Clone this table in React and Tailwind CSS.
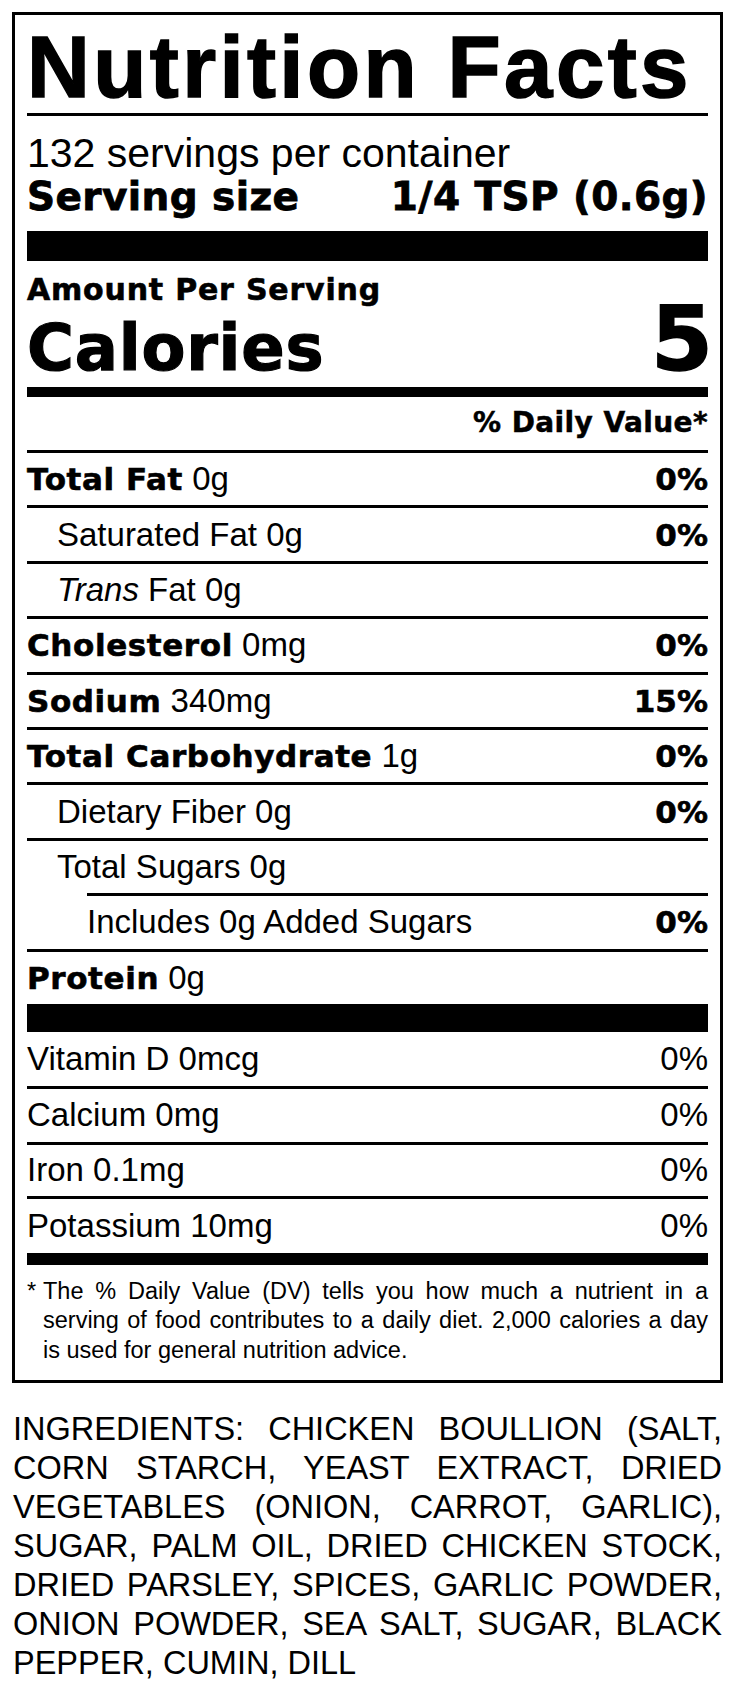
import React from 'react';

const HEAVY = "font-['DejaVu_Sans',sans-serif] font-bold";

const nutrients = [
  { label: 'Total Fat', amount: '0g', dv: '0%', bold: true },
  { label: 'Saturated Fat', amount: '0g', dv: '0%', indent: 1 },
  { label: 'Trans', italic: true, amount: 'Fat 0g', indent: 1 },
  { label: 'Cholesterol', amount: '0mg', dv: '0%', bold: true },
  { label: 'Sodium', amount: '340mg', dv: '15%', bold: true },
  { label: 'Total Carbohydrate', amount: '1g', dv: '0%', bold: true },
  { label: 'Dietary Fiber', amount: '0g', dv: '0%', indent: 1 },
  { label: 'Total Sugars', amount: '0g', indent: 1 },
  { label: 'Includes 0g Added Sugars', dv: '0%', indent: 2 },
  { label: 'Protein', amount: '0g', bold: true },
];

const vitamins = [
  { label: 'Vitamin D 0mcg', dv: '0%', h: 'h-[54px]' },
  { label: 'Calcium 0mg', dv: '0%', h: 'h-[56px] border-t-[3px]' },
  { label: 'Iron 0.1mg', dv: '0%', h: 'h-[54px] border-t-[3px]' },
  { label: 'Potassium 10mg', dv: '0%', h: 'h-[57px] border-t-[3px]' },
];

const NutrientRow = ({ n }) => {
  const indent = n.indent === 2 ? 'ml-[60px]' : '';
  const pad = n.indent === 1 ? 'pl-[30px]' : '';
  return (
    <div className={`flex h-[55.4px] items-center justify-between border-t-[3px] border-black text-[33px] leading-[40px] ${indent} ${pad}`}>
      <div className="whitespace-nowrap">
        {n.bold && (
          <span className={`${HEAVY} text-[31px] tracking-[0.6px] [-webkit-text-stroke:0.6px_black]`}>{n.label}</span>
        )}
        {n.italic && <span className="italic">{n.label}</span>}
        {!n.bold && !n.italic && <span>{n.label}</span>}
        {n.amount && <span> {n.amount}</span>}
      </div>
      {n.dv && <span className={`${HEAVY} text-[31px] [-webkit-text-stroke:0.6px_black]`}>{n.dv}</span>}
    </div>
  );
};

export default function App() {
  return (
    <div className="min-h-[1691px] w-[735px] bg-white pt-[12px] text-black font-['Liberation_Sans',Arial,sans-serif]">
      <div className="ml-[12px] w-[711px] border-[3px] border-black px-[12px]">
        {/* title */}
        <div className="h-[98px] whitespace-nowrap pt-[5px] text-[87px] font-bold leading-[93px] tracking-[3.4px] [-webkit-text-stroke:1.5px_black]">
          Nutrition Facts
        </div>
        <div className="h-[3px] bg-black" />

        {/* servings */}
        <div className="pt-[15px] pb-[12px]">
          <div className="text-[41px] leading-[44px]">132 servings per container</div>
          <div className={`flex justify-between text-[39px] leading-[44px] tracking-[0.4px] [-webkit-text-stroke:0.8px_black] ${HEAVY}`}>
            <span>Serving size</span>
            <span>1/4 TSP (0.6g)</span>
          </div>
        </div>
        <div className="h-[30px] bg-black" />

        {/* calories */}
        <div className={`flex h-[126px] items-end justify-between pb-[7px] ${HEAVY}`}>
          <div>
            <div className="mb-[9px] text-[30px] leading-[34px] tracking-[0.8px] [-webkit-text-stroke:0.6px_black]">
              Amount Per Serving
            </div>
            <div className="text-[64px] leading-[64px] tracking-[0.8px] [-webkit-text-stroke:1.2px_black]">Calories</div>
          </div>
          <div className="-mr-[5px] text-[89px] leading-[82px] [-webkit-text-stroke:1.5px_black]">5</div>
        </div>
        <div className="h-[10px] bg-black" />

        <div className={`flex h-[53px] items-center justify-end pb-[2px] text-[28px] leading-none tracking-[0.4px] [-webkit-text-stroke:0.5px_black] ${HEAVY}`}>
          % Daily Value*
        </div>

        {nutrients.map((n) => (
          <NutrientRow key={n.label} n={n} />
        ))}
        <div className="h-[28px] bg-black" />

        {vitamins.map((v) => (
          <div key={v.label} className={`flex items-center justify-between border-black text-[33px] leading-[40px] ${v.h}`}>
            <span>{v.label}</span>
            <span>{v.dv}</span>
          </div>
        ))}
        <div className="h-[12px] bg-black" />

        {/* footnote */}
        <div className="flex pt-[12px] pb-[15px] text-[23.5px] leading-[29.5px]">
          <span className="w-[16px] shrink-0">*</span>
          <p className="flex-1 text-justify">
            The % Daily Value (DV) tells you how much a nutrient in a serving of food contributes to a daily diet. 2,000 calories a day is used for general nutrition advice.
          </p>
        </div>
      </div>

      <p className="ml-[13px] mt-[27px] w-[709px] text-justify text-[32.5px] leading-[38.9px]">
        INGREDIENTS: CHICKEN BOULLION (SALT, CORN STARCH, YEAST EXTRACT, DRIED VEGETABLES (ONION, CARROT, GARLIC), SUGAR, PALM OIL, DRIED CHICKEN STOCK, DRIED PARSLEY, SPICES, GARLIC POWDER, ONION POWDER, SEA SALT, SUGAR, BLACK PEPPER, CUMIN, DILL
      </p>
    </div>
  );
}
